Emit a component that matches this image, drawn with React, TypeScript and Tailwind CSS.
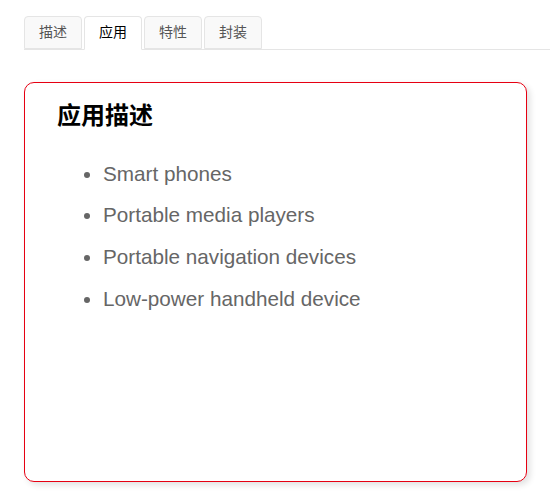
import React from "react";

const tabs = ["描述", "应用", "特性", "封装"];
const items = [
  "Smart phones",
  "Portable media players",
  "Portable navigation devices",
  "Low-power handheld device",
];

export default function App() {
  return (
    <div
      className="w-[550px] h-[496px] bg-white overflow-hidden"
      style={{ fontFamily: '"Liberation Sans", "Noto Sans CJK SC", sans-serif' }}
    >
      <div className="pt-[16px] pl-[24px]">
        <ul className="flex border-b border-[#e5e5e5] h-[34px]">
          {tabs.map((t, i) => {
            const active = i === 1;
            return (
              <li
                key={t}
                className={
                  active
                    ? "mr-[2px] h-[34px] px-[14px] text-[14px] leading-[31px] text-black bg-white border border-[#e5e5e5] border-b-white rounded-t-[4px]"
                    : "mr-[2px] h-[33px] px-[14px] text-[14px] leading-[31px] text-[#555] bg-[#f9f9f9] border border-[#e5e5e5] rounded-t-[4px]"
                }
              >
                {t}
              </li>
            );
          })}
        </ul>
      </div>
      <div className="ml-[24px] mt-[32px] w-[503px] h-[400px] border border-[#e60012] rounded-[10px] shadow-[3px_3px_6px_rgba(0,0,0,0.12)]">
        <h2 className="pl-[32px] pt-[18px] text-[24px] leading-[30px] font-bold text-black">
          应用描述
        </h2>
        <ul className="mt-[21.5px] pl-[78px] list-disc text-[20.7px] text-[#666] marker:text-[#666]">
          {items.map((it) => (
            <li key={it} className="leading-[41.7px]">
              {it}
            </li>
          ))}
        </ul>
      </div>
    </div>
  );
}
